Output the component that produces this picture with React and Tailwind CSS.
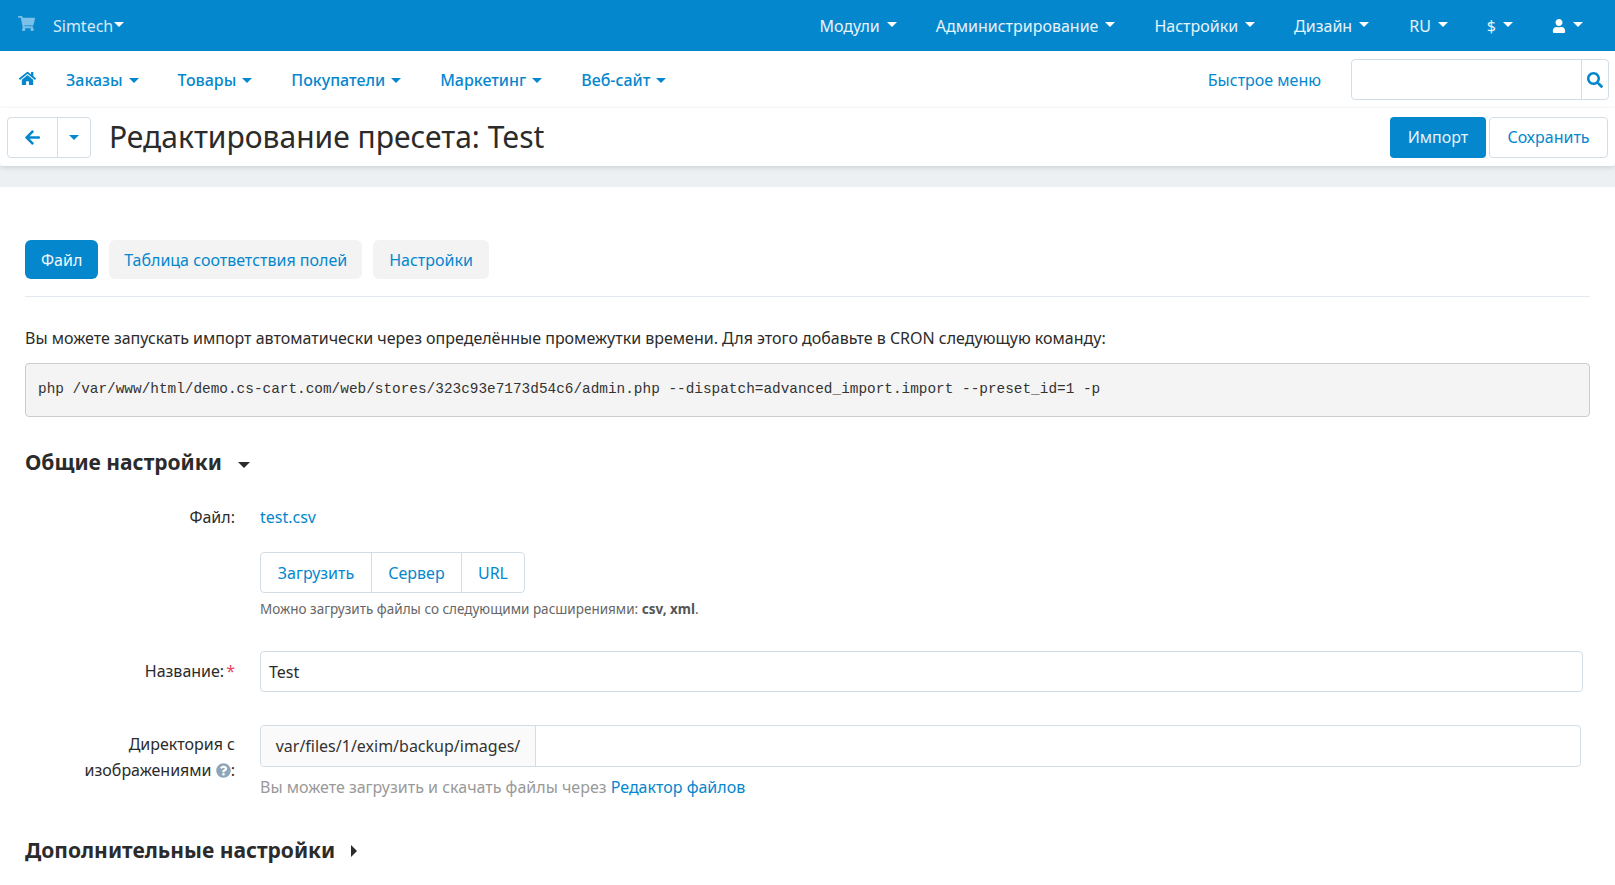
import React from "react";
import { FaShoppingCart, FaHome, FaArrowLeft, FaSearch, FaUser, FaQuestionCircle } from "react-icons/fa";

const Down = ({ className = "" }) => (
  <span className={`inline-block w-0 h-0 border-x-[5px] border-x-transparent border-t-[5px] border-t-current ${className}`} />
);

const Top = ({ children, ml }) => (
  <span className={`flex items-center text-[16px] text-[#e6f3fa] ${ml}`}>
    {children}
    <Down className="ml-[7px] -mt-[3px] text-white" />
  </span>
);
const Nav = ({ children, ml }) => (
  <span className={`flex items-center text-[16px] font-medium text-[#0587cd] ${ml}`}>
    {children}
    <Down className="ml-[6px] mt-[1px]" />
  </span>
);

export default function App() {
  return (
    <div className="h-[885px] overflow-hidden bg-white text-[#2b2b2b] font-['Noto_Sans','Open_Sans',sans-serif]">
      <header className="h-[51px] bg-[#0587cd] flex items-center pl-[18px] pr-[32px]">
        <FaShoppingCart className="text-[#7cc0e8] text-[17px] -mt-[5px]" />
        <span className="ml-[18px] text-[16px] text-[#d5eaf7]">Simtech</span>
        <Down className="ml-[1px] -mt-[3px] text-white" />
        <div className="ml-auto flex items-center">
          <Top>Модули</Top>
          <Top ml="ml-[39px]">Администрирование</Top>
          <Top ml="ml-[39px]">Настройки</Top>
          <Top ml="ml-[39px]">Дизайн</Top>
          <Top ml="ml-[40px]">RU</Top>
          <Top ml="ml-[39px]">$</Top>
          <span className="ml-[39px] flex items-center text-white">
            <FaUser className="text-[14px]" />
            <Down className="ml-[7px] -mt-[3px]" />
          </span>
        </div>
      </header>

      <nav className="h-[57px] flex items-center pl-[19px] pr-[6px]">
        <FaHome className="text-[#0587cd] text-[17px] -mt-[2px]" />
        <Nav ml="ml-[30px]">Заказы</Nav>
        <Nav ml="ml-[39px]">Товары</Nav>
        <Nav ml="ml-[39px]">Покупатели</Nav>
        <Nav ml="ml-[39px]">Маркетинг</Nav>
        <Nav ml="ml-[39px]">Веб-сайт</Nav>
        <span className="ml-auto text-[16px] text-[#0587cd]">Быстрое меню</span>
        <div className="ml-[30px] flex h-[41px] w-[258px] rounded-[4px] border border-[#d3dde6]">
          <div className="flex-1" />
          <div className="w-[26px] border-l border-[#d3dde6] box-content pl-[0px] flex items-center justify-center">
            <FaSearch className="text-[#0587cd] text-[16px]" />
          </div>
        </div>
      </nav>

      <div className="h-[58px] flex items-center pl-[7px] pr-[7px] bg-white rounded-b-[4px] relative shadow-[0_2px_5px_rgba(0,0,0,0.12),0_-1px_2px_rgba(0,0,0,0.02)]">
        <div className="flex h-[41px] rounded-[4px] border border-[#d3dde6]">
          <div className="w-[50px] flex items-center justify-center border-r border-[#d3dde6]">
            <FaArrowLeft className="text-[#0587cd] text-[17px]" />
          </div>
          <div className="w-[32px] flex items-center justify-center">
            <Down className="text-[#0587cd]" />
          </div>
        </div>
        <h1 className="ml-[18px] text-[30px] leading-[40px] text-[#2b2b2b] -mt-[1px]">Редактирование пресета: Test</h1>
        <button className="ml-auto h-[41px] w-[96px] rounded-[4px] bg-[#0587cd] text-[16px] text-[#e6f3fa]">Импорт</button>
        <button className="ml-[3px] h-[41px] w-[119px] rounded-[4px] border border-[#d3dde6] text-[16px] text-[#0587cd]">Сохранить</button>
      </div>

      <div className="h-[21px] bg-[#edf0f3]" />

      <main className="px-[25px]">
        <div className="pt-[53px] pb-[17px] border-b border-[#e3e9f0] flex gap-[11px] text-[16px]">
          <span className="h-[39px] px-[16px] flex items-center rounded-[6px] bg-[#0587cd] text-[#f0f8fc]">Файл</span>
          <span className="h-[39px] px-[15px] flex items-center rounded-[6px] bg-[#f3f3f3] text-[#0587cd]">Таблица соответствия полей</span>
          <span className="h-[39px] px-[16px] flex items-center rounded-[6px] bg-[#f3f3f3] text-[#0587cd]">Настройки</span>
        </div>

        <p className="mt-[29px] text-[16px] leading-[24px]">Вы можете запускать импорт автоматически через определённые промежутки времени. Для этого добавьте в CRON следующую команду:</p>

        <pre className="mt-[13px] h-[54px] flex items-center px-[12px] rounded-[4px] bg-[#f4f4f4] border border-[#ccc] font-['Liberation_Mono',monospace] text-[14.4px] text-[#333]">php /var/www/html/demo.cs-cart.com/web/stores/323c93e7173d54c6/admin.php --dispatch=advanced_import.import --preset_id=1 -p</pre>

        <h2 className="mt-[30px] h-[32px] flex items-center text-[21px] font-bold text-[#2b2b2b]">
          Общие настройки
          <Down className="ml-[16px] mt-[3px] border-x-[6px] border-t-[6px]" />
        </h2>

        <div className="mt-[26px] flex items-center h-[24px] text-[16px]">
          <span className="w-[210px] text-right">Файл:</span>
          <span className="ml-[25px] text-[#0587cd]">test.csv</span>
        </div>

        <div className="mt-[23px] ml-[235px]">
          <div className="inline-flex h-[41px] rounded-[4px] border border-[#d3dde6] text-[16px] text-[#0587cd]">
            <span className="w-[111px] flex items-center justify-center border-r border-[#d3dde6]">Загрузить</span>
            <span className="w-[90px] flex items-center justify-center border-r border-[#d3dde6]">Сервер</span>
            <span className="w-[62px] flex items-center justify-center">URL</span>
          </div>
          <p className="mt-[5px] text-[13.5px] leading-[22px] text-[#666]">
            Можно загрузить файлы со следующими расширениями: <b className="text-[#555]">csv, xml</b>.
          </p>
        </div>

        <div className="mt-[31px] flex items-center text-[16px]">
          <span className="w-[210px] text-right -mt-[2px]">
            Название:<span className="text-[#ef4060] ml-[2px]">*</span>
          </span>
          <div className="ml-[25px] w-[1323px] h-[41px] flex items-center px-[8px] rounded-[4px] border border-[#d3dde6]">Test</div>
        </div>

        <div className="mt-[33px] flex items-start text-[16px]">
          <span className="w-[210px] text-right leading-[26px] pt-[6px]">
            Директория с изображениями <FaQuestionCircle className="inline text-[#8fa6b8] text-[15px] -mt-[3px]" />:
          </span>
          <div className="ml-[25px]">
            <div className="w-[1321px] h-[42px] flex rounded-[4px] border border-[#d3dde6]">
              <span className="w-[275px] flex items-center justify-center bg-[#fafafa] border-r border-[#d3dde6] rounded-l-[4px] text-[#333] whitespace-nowrap">var/files/1/exim/backup/images/</span>
            </div>
            <p className="mt-[9px] leading-[22px] text-[#999]">
              Вы можете загрузить и скачать файлы через <span className="text-[#0587cd]">Редактор файлов</span>
            </p>
          </div>
        </div>

        <h2 className="mt-[37px] h-[32px] flex items-center text-[21px] font-bold text-[#2b2b2b]">
          Дополнительные настройки
          <span className="ml-[16px] inline-block w-0 h-0 border-y-[6px] border-y-transparent border-l-[6px] border-l-current" />
        </h2>
      </main>
    </div>
  );
}
